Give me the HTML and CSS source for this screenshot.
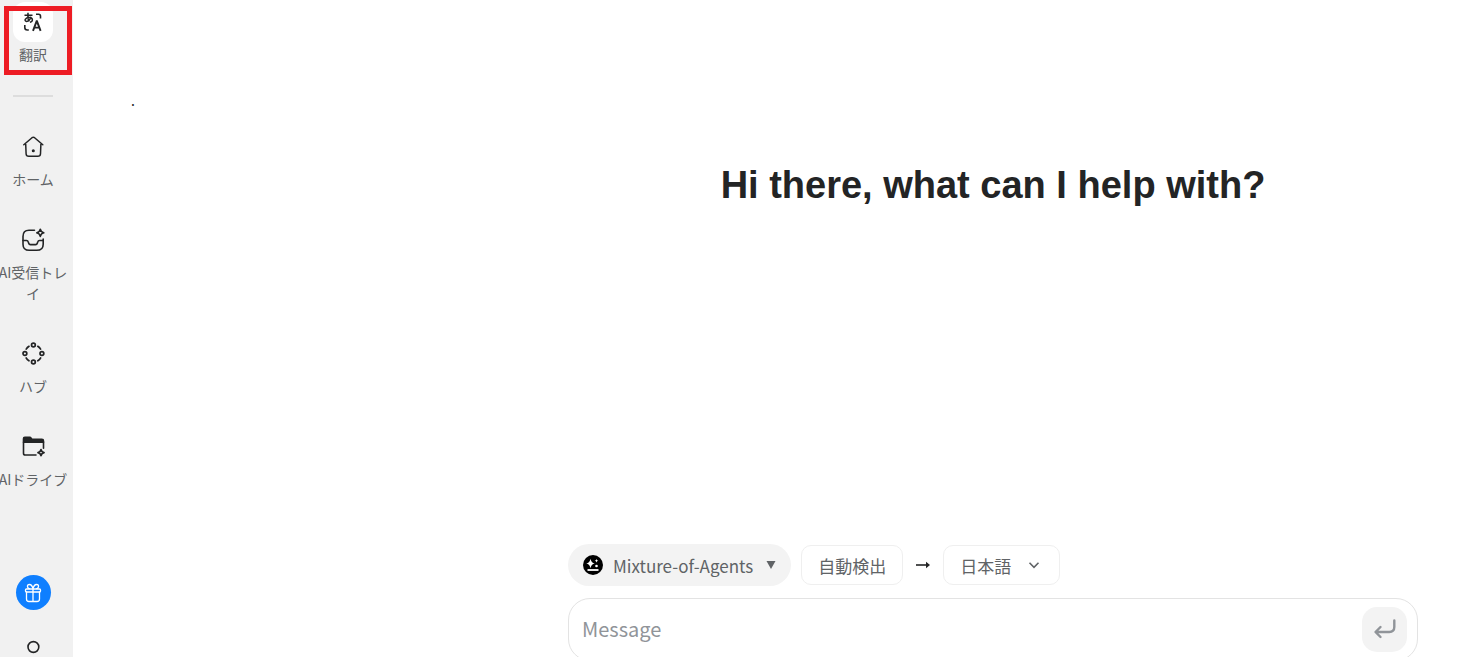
FILE: index.html
```html
<!DOCTYPE html>
<html lang="ja">
  <head>
    <meta charset="utf-8" />
    <meta name="viewport" content="width=device-width, initial-scale=1.0" />
    <title>翻訳</title>
    <link rel="stylesheet" href="styles.css">
  </head>

  <body>
    <nav class="sidebar">
      <a href="#" class="item valgt">
        <span class="icon">
          <svg width="22" height="22" viewBox="0 0 22 22" fill="none" stroke="#232425" stroke-width="1.6">
            <path d="M2.500 4.200h8M6 1.800c-.3 3.500-.1 6.500 1 8.700M9 5.800c-.8 2.900-2.500 4.600-4.400 4.600C1.800 10.200 3 6.500 7.300 6.500c3.800 0 4.200 4.100.6 4.700" stroke-width="1.500" />
            <path d="M14 3.300h2.500q2 0 2 2V7.500M2.800 14v2.500q0 2.500 2.500 2.500h1.500" />
            <path d="M11 19.800l3.600-9.500h.4l3.600 9.500M12.400 16.600h4.900" stroke-width="1.900" />
          </svg>
        </span>
        <span class="label">翻訳</span>
        <span class="marker"></span>
      </a>

      <hr class="divider" />

      <a href="#" class="item">
        <span class="icon">
          <svg width="24" height="24" viewBox="0 0 24 24" fill="none" stroke="#232425" stroke-width="1.500" stroke-linecap="round" stroke-linejoin="round">
            <path d="M2.800 9.800L11 2.700q1.300-1 2.600 0l8.200 7.100M4.700 9l.4 9.700q.1 2.600 2.700 2.600h9q2.600 0 2.700-2.600l.4-9.700" />
            <circle cx="12.300" cy="15.700" r=".8" fill="#232425" />
          </svg>
        </span>
        <span class="label">ホーム</span>
      </a>

      <a href="#" class="item">
        <span class="icon">
          <svg width="24" height="24" viewBox="0 0 24 24" fill="none" stroke="#232425" stroke-width="1.600" stroke-linecap="round" stroke-linejoin="round">
            <path d="M13.500 2.300H8Q2 2.300 2 8.500v7.700q0 6.100 6.200 6.100h7.500q6.500 0 6.500-6.100V11" />
            <path d="M2 12.500h3.500q1.300 0 1.700 1.300l.5 1.500q.4 1.300 1.700 1.300h5.200q1.300 0 1.700-1.300l.5-1.500q.400-1.300 1.700-1.300h3.700" />
            <path d="M19.300 1.200q.6 3 3.500 3.600-2.900.6-3.500 3.600-.6-3-3.500-3.600 2.900-.6 3.500-3.600z" />
          </svg>
        </span>
        <span class="label">AI受信トレイ</span>
      </a>

      <a href="#" class="item">
        <span class="icon">
          <svg width="24" height="24" viewBox="0 0 24 24" fill="none" stroke="#232425" stroke-width="1.700" stroke-linecap="round">
            <circle cx="12.400" cy="3" r="1.900" />
            <circle cx="20.900" cy="11.500" r="1.900" />
            <circle cx="12.400" cy="20" r="1.900" />
            <circle cx="3.900" cy="11.500" r="1.900" />
            <path d="M16.800 4.300a9 9 0 0 1 2.800 2.800M19.600 16a9 9 0 0 1-2.800 2.800M8 18.800A9 9 0 0 1 5.200 16M5.200 7.100A9 9 0 0 1 8 4.300" />
          </svg>
        </span>
        <span class="label">ハブ</span>
      </a>

      <a href="#" class="item">
        <span class="icon">
          <svg width="24" height="24" viewBox="0 0 24 24" fill="none" stroke="#232425" stroke-width="1.600" stroke-linecap="round" stroke-linejoin="round">
            <path d="M2.500 7.200V3.700q0-1.300 1.300-1.300h5q.8 0 1.300.7l.8 1.200h10q1.600 0 1.600 1.600v1.300z" fill="#232425" />
            <path d="M2.500 7.200v11q0 1.800 1.800 1.800H15M22.500 7.200v6" />
            <path d="M20 14.600q.5 2.500 3 3-2.500.500-3 3-.5-2.500-3-3 2.500-.5 3-3z" stroke-width="1.800" />
          </svg>
        </span>
        <span class="label">AIドライブ</span>
      </a>

      <button class="gift" aria-label="ギフト">
        <svg width="18" height="20" viewBox="0 0 18 20" fill="none" stroke="#fff" stroke-width="1.300" stroke-linecap="round" stroke-linejoin="round">
          <rect x="1.500" y="6" width="15" height="3" rx="1" />
          <path d="M2.500 9v7q0 2.500 2.500 2.500h8q2.500 0 2.500-2.500V9M9 6v12.500" />
          <path d="M9 5.500Q7.800 1.500 5.500 1.500T3.500 3.700 5.500 5.700M9 5.500q1.200-4 3.500-4t2 2.200-2 2" />
        </svg>
      </button>

      <button class="user" aria-label="アカウント">
        <svg width="24" height="24" viewBox="0 0 24 24" fill="none" stroke="#232425" stroke-width="1.600">
          <circle cx="12.400" cy="7" r="5.400" />
          <path d="M3 24q1-6 9.400-6t9.400 6" />
        </svg>
      </button>
    </nav>

    <main>
      <aside class="history">.</aside>

      <section class="chat">
        <h1>Hi there, what can I help with?</h1>

        <form class="composer">
          <div class="options">
            <button type="button" class="model">
              <svg width="20" height="20" viewBox="0 0 20 20">
                <circle cx="10" cy="10" r="10" fill="#000" />
                <path d="M7.500 3.800q.7 4 4.200 4.700-3.500.7-4.200 4.700-.7-4-4.200-4.700 3.500-.7 4.200-4.700z" fill="#fff" />
                <path d="M13.500 4q.3 1.500 1.800 1.800-1.500.3-1.800 1.800-.3-1.500-1.800-1.800 1.500-.3 1.800-1.800z" fill="#fff" />
                <circle cx="13.500" cy="11" r="1.300" fill="#fff" />
                <path d="M4.500 15h11" stroke="#fff" stroke-width="1.800" />
              </svg>
              <span>Mixture-of-Agents</span>
              <svg class="caret" width="10" height="8" viewBox="0 0 10 8">
                <path d="M.5 0h9L5 8z" fill="#606366" />
              </svg>
            </button>

            <button type="button" class="lang">自動検出</button>

            <svg class="arrow" width="14" height="10" viewBox="0 0 14 10">
              <path d="M0 5h12" stroke="#232425" stroke-width="1.600" />
              <path d="M10 1.800L14 5 10 8.200z" fill="#232425" />
            </svg>

            <label class="target">
              <select class="lang" aria-label="翻訳先の言語">
                <option>日本語</option>
                <option>English</option>
              </select>
              <svg class="chevron" width="12" height="12" viewBox="0 0 12 12" fill="none" stroke="#606366" stroke-width="1.600">
                <path d="M1.500 3.800L6 8.300l4.500-4.500" />
              </svg>
            </label>
          </div>

          <div class="message">
            <input type="text" placeholder="Message" aria-label="Message" />
            <button class="send" aria-label="送信">
              <svg width="24" height="24" viewBox="0 0 24 24" fill="none" stroke="#909499" stroke-width="2.400" stroke-linecap="round" stroke-linejoin="round">
                <path d="M21.300 2.500V9q0 5-5 5H3M7.500 9L2.500 14l5 5" />
              </svg>
            </button>
          </div>
        </form>
      </section>
    </main>
  </body>
</html>
```

FILE: styles.css
```css
* {
  box-sizing: border-box;
}

body {
  display: flex;
  height: 100vh;
  margin: 0;
  overflow: hidden;
  background-color: #fff;
  color: #232425;
  font-family: "Noto Sans CJK JP", sans-serif;
}

button,
input,
select {
  font-family: inherit;
}

svg {
  display: block;
  flex-shrink: 0;
}

/* sidebar */
.sidebar {
  display: flex;
  flex-direction: column;
  flex-shrink: 0;
  align-items: center;
  gap: 30px;
  width: 73px;
  padding: 2px 7px 0 0;
  overflow: hidden;
  background-color: #f1f1f1;
}

.item {
  position: relative;
  display: flex;
  flex-direction: column;
  flex-shrink: 0;
  align-items: center;
  gap: 2px;
  width: 72px;
  color: #606366;
  text-decoration: none;
}

.icon {
  display: flex;
  justify-content: center;
  align-items: center;
  width: 40px;
  height: 40px;
  border-radius: 12px;
}

.valgt .icon {
  background-color: #fff;
}

.label {
  font-size: 14px;
  line-height: 21px;
  text-align: center;
}

.marker {
  position: absolute;
  top: 4px;
  left: 7px;
  width: 68px;
  height: 69px;
  border: 5px solid #ed1c24;
}

.divider {
  flex-shrink: 0;
  width: 40px;
  height: 2px;
  margin: 0;
  border: 0;
  background-color: #ddd;
}

.gift,
.user {
  display: flex;
  flex-shrink: 0;
  justify-content: center;
  align-items: center;
  padding: 0;
  border: 0;
}

.gift {
  width: 35px;
  height: 35px;
  margin-top: 55px;
  border-radius: 50%;
  background-color: #0f7fff;
}

.user {
  background: none;
}

/* chat */
main {
  display: grid;
  flex: 1;
  grid-template-columns: 451px 1fr;
}

.history {
  padding: 90px 58px 0;
  font-size: 14px;
}

.chat {
  display: flex;
  flex-direction: column;
  align-items: center;
  padding: 162px 44px 0;
}

h1 {
  margin: 0;
  font-family: "Liberation Sans", Arial, sans-serif;
  font-size: 38px;
  line-height: 46px;
}

.composer {
  width: 100%;
  max-width: 850px;
  margin-top: 336px;
}

.options {
  display: flex;
  align-items: center;
  gap: 10px;
}

.model {
  display: flex;
  align-items: center;
  gap: 10px;
  height: 42px;
  padding: 0 15px;
  border: 0;
  border-radius: 21px;
  background-color: #f3f3f3;
  color: #606366;
  font-size: 17px;
}

.caret {
  margin-left: 3px;
}

.lang {
  height: 40px;
  padding: 0 16px;
  border: 1px solid #efefef;
  border-radius: 10px;
  background-color: #fff;
  color: #606366;
  font-size: 17px;
}

.arrow {
  margin: 0 3px;
}

.target {
  position: relative;
}

.target .lang {
  width: 117px;
  appearance: none;
}

.chevron {
  position: absolute;
  top: 14px;
  right: 20px;
  pointer-events: none;
}

.message {
  display: flex;
  align-items: center;
  height: 63px;
  margin-top: 12px;
  padding: 0 10px 0 13px;
  border: 1px solid #e3e3e3;
  border-radius: 22px;
}

.message input {
  flex: 1;
  min-width: 0;
  padding: 0 0 2px;
  border: 0;
  outline: 0;
  font-size: 20px;
}

.message input::placeholder {
  color: #909499;
}

.send {
  display: flex;
  justify-content: center;
  align-items: center;
  width: 45px;
  height: 45px;
  padding: 0;
  border: 0;
  border-radius: 15px;
  background-color: #f3f3f3;
}
```
